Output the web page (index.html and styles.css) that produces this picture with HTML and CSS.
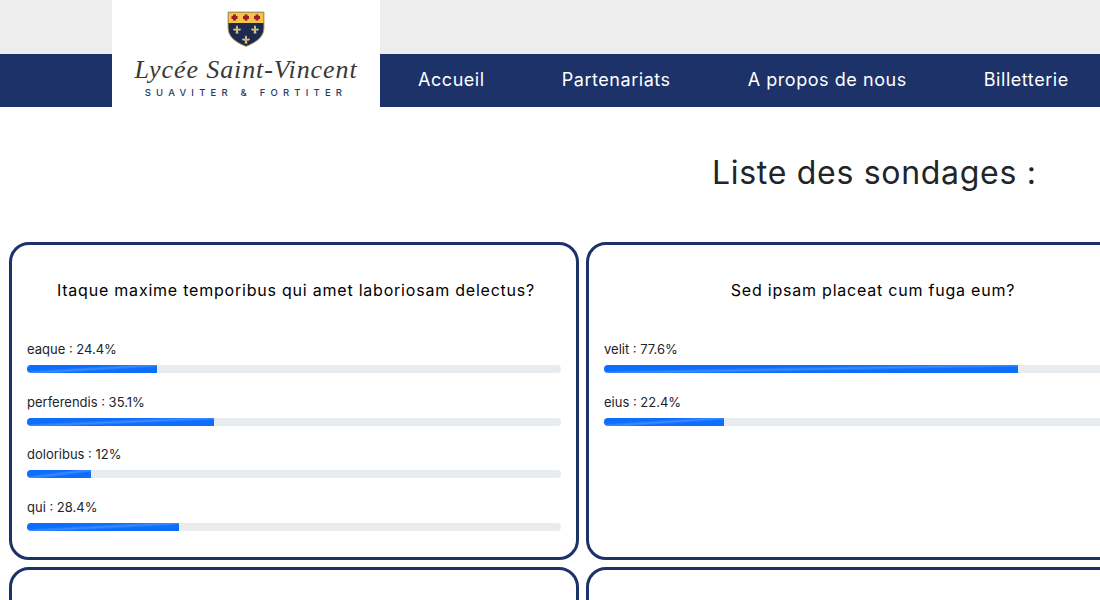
FILE: index.html
```html
<!DOCTYPE html>
<html>
	<head>
		<meta charset="UTF-8">
		<title>Liste des sondages</title>
		<link rel="stylesheet" href="styles.css">
	</head>
	<body>
		<header class="header">
			<a class="logo" href="#">
				<svg class="logo-shield" viewBox="0 0 38 36" width="38" height="36">
					<path d="M1 1H37V17C37 26 29 31.500 19 35.500C9 31.500 1 26 1 17Z" fill="#1c2a4f" stroke="#c4a765"/>
					<path d="M1.500 1.500H36.500V12H1.500Z" fill="#f5c545"/>
					<g fill="#9e1c2c">
						<path d="M6 3.500H9V5H10.500V8H9V9.500H6V8H4.500V5H6Z"/>
						<path d="M17.500 3.500H20.500V5H22V8H20.500V9.500H17.500V8H16V5H17.500Z"/>
						<path d="M28.500 3.500H31.500V5H33V8H31.500V9.500H28.500V8H27V5H28.500Z"/>
					</g>
					<g fill="#d9c680">
						<path d="M10 14C11.300 15.500 11.300 17 10.600 18.500C11.500 17.300 13.300 17 14 18.300C14 19.500 12.500 20 10.800 19.600L11.500 22.500H8.500L9.200 19.600C7.500 20 6 19.500 6 18.300C6.700 17 8.500 17.300 9.400 18.500C8.700 17 8.700 15.500 10 14Z"/>
						<path d="M28 14C29.300 15.500 29.300 17 28.600 18.500C29.500 17.300 31.300 17 32 18.300C32 19.500 30.500 20 28.800 19.600L29.500 22.500H26.500L27.200 19.600C25.500 20 24 19.500 24 18.300C24.700 17 26.500 17.300 27.400 18.500C26.700 17 26.700 15.500 28 14Z"/>
						<path d="M19 24C20.300 25.500 20.300 27 19.600 28.500C20.500 27.300 22.300 27 23 28.300C23 29.500 21.500 30 19.800 29.600L20.500 32.500H17.500L18.200 29.600C16.500 30 15 29.500 15 28.300C15.700 27 17.500 27.300 18.400 28.500C17.700 27 17.700 25.500 19 24Z"/>
					</g>
				</svg>
				<span class="logo-name">Lycée Saint-Vincent</span>
				<span class="logo-motto">SUAVITER &amp; FORTITER</span>
			</a>
			<nav class="nav">
				<a href="#">Accueil</a>
				<a href="#">Partenariats</a>
				<a href="#">A propos de nous</a>
				<a href="#">Billetterie</a>
			</nav>
		</header>
		<h1 class="page-title">Liste des sondages :</h1>
		<div class="polls">
			<section class="poll">
				<h2>Itaque maxime temporibus qui amet laboriosam delectus?</h2>
				<div class="answer">
					<p>eaque : 24.4%</p>
					<div class="bar"><div class="bar-fill" style="width: 24.4%"></div></div>
				</div>
				<div class="answer">
					<p>perferendis : 35.1%</p>
					<div class="bar"><div class="bar-fill" style="width: 35.1%"></div></div>
				</div>
				<div class="answer">
					<p>doloribus : 12%</p>
					<div class="bar"><div class="bar-fill" style="width: 12%"></div></div>
				</div>
				<div class="answer">
					<p>qui : 28.4%</p>
					<div class="bar"><div class="bar-fill" style="width: 28.4%"></div></div>
				</div>
			</section>
			<section class="poll">
				<h2>Sed ipsam placeat cum fuga eum?</h2>
				<div class="answer">
					<p>velit : 77.6%</p>
					<div class="bar"><div class="bar-fill" style="width: 77.6%"></div></div>
				</div>
				<div class="answer">
					<p>eius : 22.4%</p>
					<div class="bar"><div class="bar-fill" style="width: 22.4%"></div></div>
				</div>
			</section>
			<section class="poll"></section>
			<section class="poll"></section>
		</div>
	</body>
</html>
```

FILE: styles.css
```css
html, body {
	overflow: hidden;
	height: 600px;
}
body {
	margin: 0;
	padding: 0;
	font-family: Inter, "Open Sans", sans-serif;
	color: #212529;
	background: #fff;
}
a {
	text-decoration: none;
	color: inherit;
}
.header {
	display: flex;
	height: 107px;
	padding-left: 112px;
	background: linear-gradient(#eeedee 54px, #1c3269 54px);
}
.logo {
	display: flex;
	flex-direction: column;
	align-items: center;
	width: 268px;
	padding-top: 11px;
	box-sizing: border-box;
	background: #fff;
}
.logo-name {
	margin-top: 8px;
	font-family: "Liberation Serif", serif;
	font-style: italic;
	font-size: 26px;
	line-height: 30px;
	letter-spacing: .9px;
	color: #3a3835;
}
.logo-motto {
	margin-top: 2px;
	font-size: 9.500px;
	line-height: 12px;
	font-weight: 500;
	letter-spacing: 5.200px;
	color: #2b3a63;
}
.nav {
	display: flex;
	align-items: center;
	gap: 77px;
	height: 53px;
	margin-top: 53px;
	padding-left: 38px;
	font-size: 18px;
	font-weight: 400;
	letter-spacing: .55px;
	color: #fff;
	white-space: nowrap;
}
.page-title {
	margin: 47px 0 50px;
	padding-left: 712px;
	font-size: 32px;
	line-height: 38px;
	font-weight: 400;
	letter-spacing: .7px;
	white-space: nowrap;
}
.polls {
	display: grid;
	grid-template-columns: 570px 570px;
	grid-auto-rows: 318px;
	gap: 7px;
	padding-left: 9px;
}
.poll {
	padding: 0 15px;
	border: 3px solid #1c3269;
	border-radius: 20px;
}
.poll h2 {
	margin: 33px 0 37px;
	padding-left: 4px;
	font-size: 16px;
	line-height: 24px;
	font-weight: 400;
	letter-spacing: .78px;
	text-align: center;
	color: #000;
}
.answer {
	height: 52.700px;
}
.answer p {
	margin: 0 0 6px;
	font-size: 13px;
	line-height: 20px;
}
.bar {
	height: 8px;
	border-radius: 4px;
	background: #e9ecef;
	overflow: hidden;
}
.bar-fill {
	height: 8px;
	background: linear-gradient(to bottom right, #0d6efd 36%, #3d8bfd 50%, #0d6efd 64%);
}
```
